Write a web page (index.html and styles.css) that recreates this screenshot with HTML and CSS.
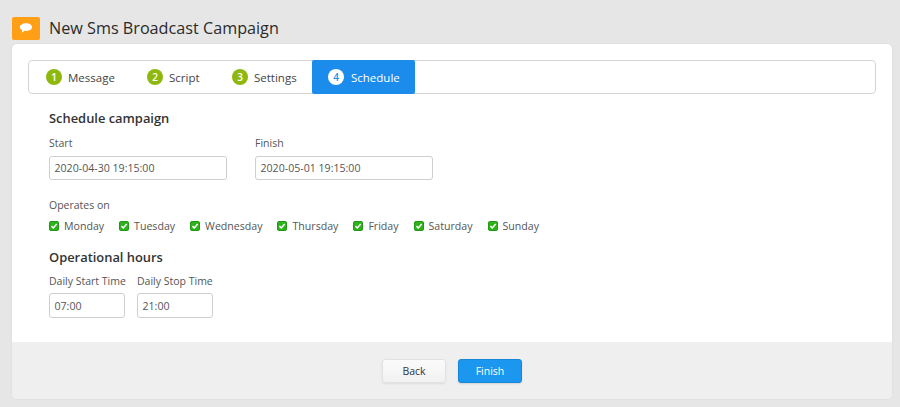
FILE: index.html
```html
<!DOCTYPE html>
<html lang="en">
<head>
<meta charset="utf-8">
<title>New Sms Broadcast Campaign</title>
<link rel="stylesheet" href="styles.css">
</head>
<body>
<header class="page-head">
  <span class="logo">
    <svg width="14" height="12" viewBox="0 0 16 13"><path d="M8 1C3.900 1 1 3 1 5.400c0 1.500 1.100 2.800 2.800 3.600-.1 1-.6 1.900-1.300 2.600 1.600-.2 3-1 3.900-1.900.5.100 1 .1 1.600.1 4.100 0 7-2 7-4.400S12.100 1 8 1z" fill="#fff"/></svg>
  </span>
  <h1 class="page-title">New Sms Broadcast Campaign</h1>
</header>
<main class="card">
  <div class="card-body">
    <nav class="steps">
      <div class="step step-1"><span class="num">1</span>Message</div>
      <div class="step step-2"><span class="num">2</span>Script</div>
      <div class="step step-3"><span class="num">3</span>Settings</div>
      <div class="step step-active"><span class="num">4</span>Schedule</div>
    </nav>
    <section class="form">
      <h2 class="section-title">Schedule campaign</h2>
      <div class="date-row">
        <div class="field">
          <label class="lbl">Start</label>
          <div class="input input-date">2020-04-30 19:15:00</div>
        </div>
        <div class="field">
          <label class="lbl">Finish</label>
          <div class="input input-date">2020-05-01 19:15:00</div>
        </div>
      </div>
      <div class="lbl ops-label">Operates on</div>
      <div class="days">
        <span class="day"><svg class="chk" width="10" height="10" viewBox="0 0 10 10"><rect x=".5" y=".5" width="9" height="9" rx="1.300" fill="#2fb01c" stroke="#1f9a12"/><path d="M2.400 5.100l1.900 1.900 3.400-4" fill="none" stroke="#fff" stroke-width="1.500"/></svg>Monday</span>
        <span class="day"><svg class="chk" width="10" height="10" viewBox="0 0 10 10"><rect x=".5" y=".5" width="9" height="9" rx="1.300" fill="#2fb01c" stroke="#1f9a12"/><path d="M2.400 5.100l1.900 1.900 3.400-4" fill="none" stroke="#fff" stroke-width="1.500"/></svg>Tuesday</span>
        <span class="day"><svg class="chk" width="10" height="10" viewBox="0 0 10 10"><rect x=".5" y=".5" width="9" height="9" rx="1.300" fill="#2fb01c" stroke="#1f9a12"/><path d="M2.400 5.100l1.900 1.900 3.400-4" fill="none" stroke="#fff" stroke-width="1.500"/></svg>Wednesday</span>
        <span class="day"><svg class="chk" width="10" height="10" viewBox="0 0 10 10"><rect x=".5" y=".5" width="9" height="9" rx="1.300" fill="#2fb01c" stroke="#1f9a12"/><path d="M2.400 5.100l1.900 1.900 3.400-4" fill="none" stroke="#fff" stroke-width="1.500"/></svg>Thursday</span>
        <span class="day"><svg class="chk" width="10" height="10" viewBox="0 0 10 10"><rect x=".5" y=".5" width="9" height="9" rx="1.300" fill="#2fb01c" stroke="#1f9a12"/><path d="M2.400 5.100l1.900 1.900 3.400-4" fill="none" stroke="#fff" stroke-width="1.500"/></svg>Friday</span>
        <span class="day"><svg class="chk" width="10" height="10" viewBox="0 0 10 10"><rect x=".5" y=".5" width="9" height="9" rx="1.300" fill="#2fb01c" stroke="#1f9a12"/><path d="M2.400 5.100l1.900 1.900 3.400-4" fill="none" stroke="#fff" stroke-width="1.500"/></svg>Saturday</span>
        <span class="day"><svg class="chk" width="10" height="10" viewBox="0 0 10 10"><rect x=".5" y=".5" width="9" height="9" rx="1.300" fill="#2fb01c" stroke="#1f9a12"/><path d="M2.400 5.100l1.900 1.900 3.400-4" fill="none" stroke="#fff" stroke-width="1.500"/></svg>Sunday</span>
      </div>
      <h2 class="section-title hours-title">Operational hours</h2>
      <div class="time-row">
        <div class="field">
          <label class="lbl">Daily Start Time</label>
          <div class="input input-time">07:00</div>
        </div>
        <div class="field">
          <label class="lbl">Daily Stop Time</label>
          <div class="input input-time">21:00</div>
        </div>
      </div>
    </section>
  </div>
  <footer class="card-foot">
    <button class="btn btn-back">Back</button>
    <button class="btn btn-finish">Finish</button>
  </footer>
</main>
</body>
</html>
```
FILE: styles.css
```css
* { box-sizing: border-box; }
html, body { margin: 0; height: 100%; }
body {
  width: 900px;
  height: 407px;
  overflow: hidden;
  background: #e6e6e6;
  font-family: "Open Sans", "Noto Sans", sans-serif;
  color: #444;
  padding: 16px 8px 0 12px;
}
.page-head {
  display: flex;
  align-items: center;
  height: 24px;
  gap: 9px;
}
.logo {
  width: 28px;
  height: 23px;
  background: #ff9f15;
  border-radius: 2px;
  display: flex;
  align-items: center;
  justify-content: center;
}
.page-title {
  margin: 0;
  font-size: 16.2px;
  font-weight: 400;
  color: #2b2b2b;
}
.card {
  margin-top: 4px;
  height: 355px;
  background: #fff;
  border-radius: 5px;
  display: flex;
  flex-direction: column;
  overflow: hidden;
  box-shadow: 0 0 2px rgba(0,0,0,.08);
}
.card-body {
  flex: 1;
  padding: 16px 16px 0;
}
.steps {
  display: flex;
  height: 34px;
  border: 1px solid #d5d5d5;
  border-radius: 4px;
}
.step {
  display: flex;
  align-items: center;
  font-size: 11.5px;
  color: #444;
  gap: 6px;
}
.step-1 { width: 101px; padding-left: 17px; }
.step-2 { width: 85px; padding-left: 17px; }
.step-3 { width: 97px; padding-left: 17px; }
.step-active {
  width: 103px;
  margin: -1px 0;
  padding-left: 16px;
  gap: 7px;
  background: #1b8cec;
  color: #fff;
  border-radius: 2px;
}
.num {
  width: 16px;
  height: 16px;
  border-radius: 50%;
  background: #8fb80f;
  color: #fff;
  font-size: 10px;
  font-weight: 600;
  display: flex;
  align-items: center;
  justify-content: center;
}
.step-active .num { background: #fff; color: #1b8cec; }
.form { padding: 15px 0 0 21px; }
.section-title {
  margin: 0;
  font-size: 12.9px;
  line-height: 18px;
  font-weight: 600;
  color: #333;
}
.date-row { display: flex; gap: 28px; margin-top: 9px; }
.field { display: flex; flex-direction: column; width: 76px; }
.date-row .field { width: 178px; }
.lbl {
  font-size: 10.5px;
  line-height: 14px;
  color: #555;
  white-space: nowrap;
}
.input {
  border: 1px solid #cfcfcf;
  border-radius: 3px;
  background: #fff;
  font-size: 10.6px;
  color: #555;
  display: flex;
  align-items: center;
  padding-left: 4.5px;
}
.input-date { width: 178px; height: 24px; margin-top: 6px; }
.input-time { width: 76px; height: 25px; margin-top: 5px; }
.ops-label { margin-top: 18px; }
.days { display: flex; gap: 15px; margin-top: 7px; }
.day {
  display: flex;
  align-items: center;
  gap: 5px;
  font-size: 10.6px;
  line-height: 14px;
  color: #555;
}
.chk { display: block; }
.hours-title { margin-top: 15px; }
.time-row { display: flex; gap: 12px; margin-top: 8px; }
.card-foot {
  height: 57px;
  background: #efefef;
  display: flex;
  justify-content: center;
  align-items: center;
  gap: 12px;
  padding-top: 1px;
}
.btn {
  width: 64px;
  height: 24px;
  border-radius: 3px;
  font-family: inherit;
  font-size: 10.5px;
  padding: 0;
}
.btn-back {
  background: linear-gradient(#fbfbfb, #f1f1f1);
  border: 1px solid #e2e2e2;
  color: #333;
  box-shadow: 0 1px 2px rgba(0,0,0,.08);
}
.btn-finish {
  background: #1b97ef;
  border: 1px solid #1688da;
  color: #fff;
  box-shadow: 0 1px 2px rgba(0,0,0,.12);
}
```
